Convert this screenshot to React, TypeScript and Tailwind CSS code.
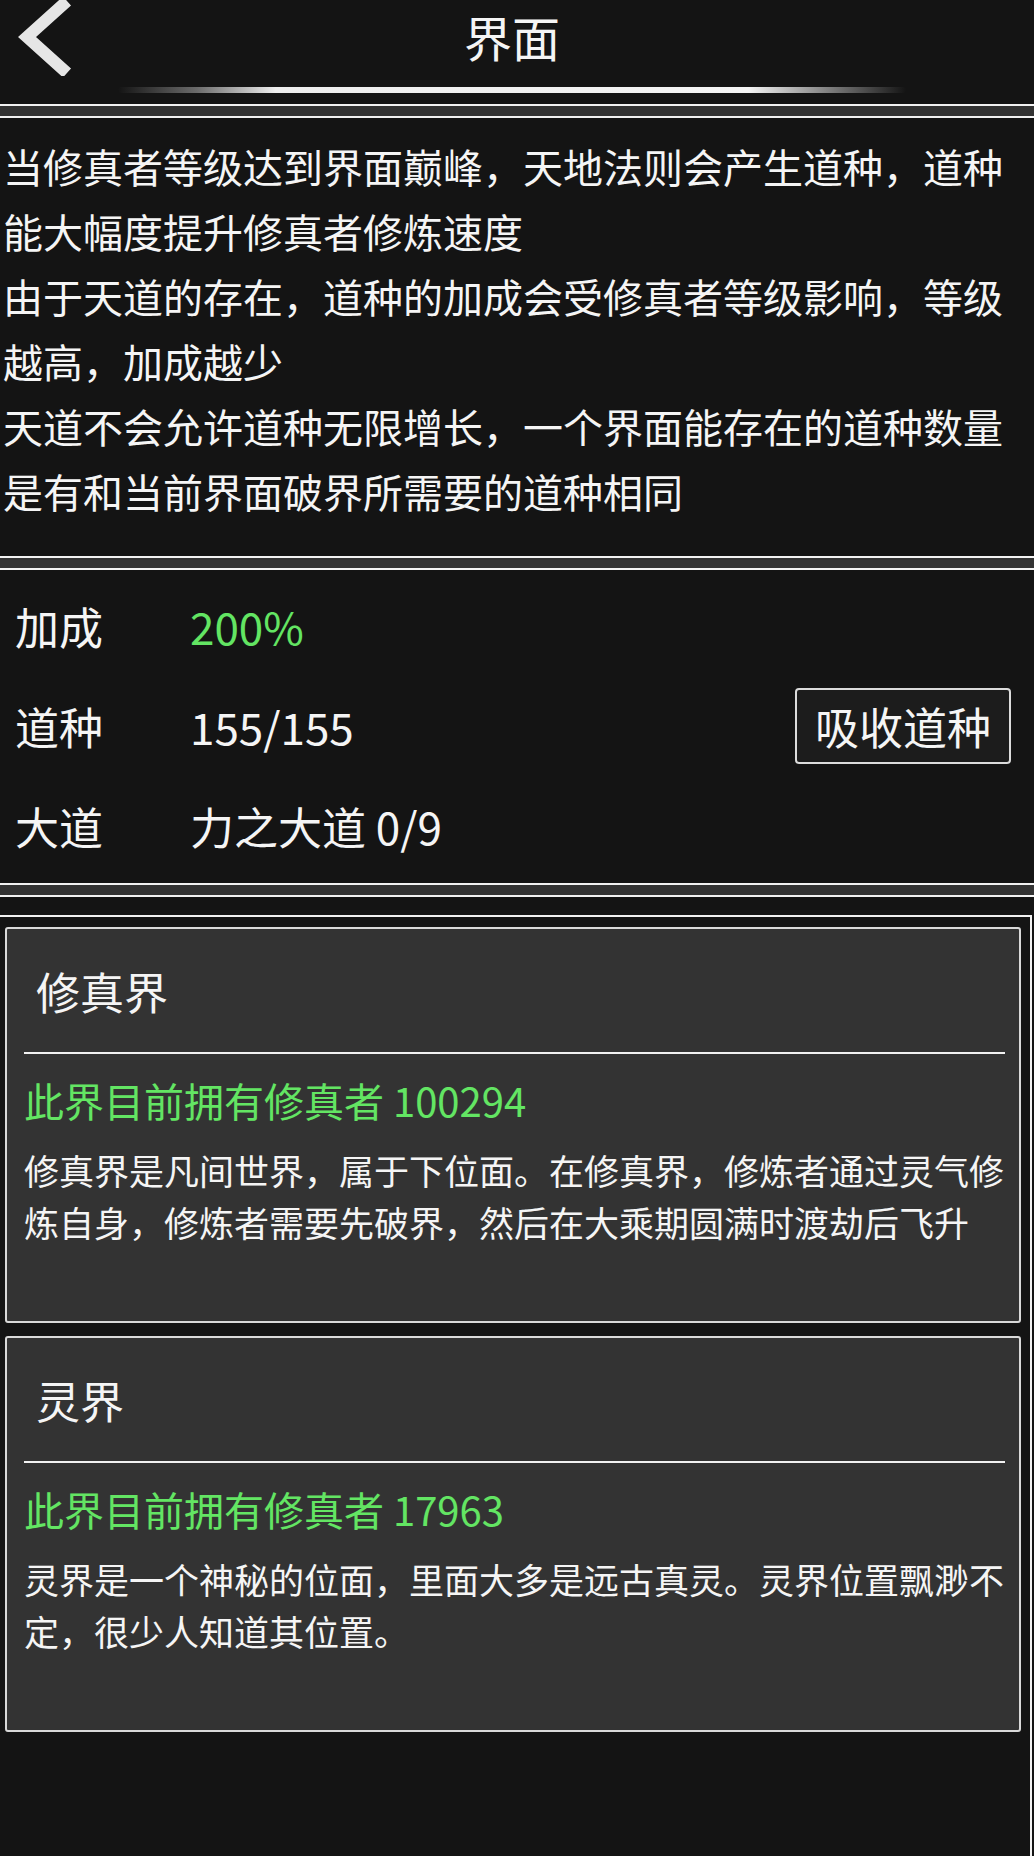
import React from "react";

const FONT = { fontFamily: '"Noto Sans CJK SC", "Noto Sans", sans-serif' };

const Separator = () => (
  <div className="h-[14px] border-y-2 border-[#f2f2f2] bg-[#333333]" />
);

const BackIcon = () => (
  <svg width="60" height="76" viewBox="0 0 60 76" fill="none">
    <path
      d="M50 1 L10 37 L50 73"
      stroke="#e6e6e6"
      strokeWidth="12"
      strokeLinejoin="miter"
    />
  </svg>
);

const paragraphs = [
  "当修真者等级达到界面巅峰，天地法则会产生道种，道种能大幅度提升修真者修炼速度",
  "由于天道的存在，道种的加成会受修真者等级影响，等级越高，加成越少",
  "天道不会允许道种无限增长，一个界面能存在的道种数量是有和当前界面破界所需要的道种相同",
];

const realms = [
  {
    name: "修真界",
    count: 100294,
    desc: "修真界是凡间世界，属于下位面。在修真界，修炼者通过灵气修炼自身，修炼者需要先破界，然后在大乘期圆满时渡劫后飞升",
  },
  {
    name: "灵界",
    count: 17963,
    desc: "灵界是一个神秘的位面，里面大多是远古真灵。灵界位置飘渺不定，很少人知道其位置。",
  },
];

const StatRow = ({
  label,
  children,
  action,
}: {
  label: string;
  children: React.ReactNode;
  action?: React.ReactNode;
}) => (
  <div className="flex h-[100px] items-center pl-[15px] pr-[23px]">
    <span className="w-[175px] text-[44px]">{label}</span>
    <span className="flex-1 text-[44px]">{children}</span>
    {action}
  </div>
);

const RealmCard = ({
  name,
  count,
  desc,
}: {
  name: string;
  count: number;
  desc: string;
}) => (
  <div className="w-[1016px] rounded-[3px] border-2 border-[#d9d9d9] bg-[#333333] pb-[73px] pl-[17px] pr-[14px]">
    <div className="flex h-[123px] items-center pl-[12px] text-[44px] leading-none">
      {name}
    </div>
    <div className="h-[2px] bg-[#f2f2f2]" />
    <div className="mt-[18px] text-[40px] leading-[56px] text-[#63e563]">
      此界目前拥有修真者 {count}
    </div>
    <p className="mt-[16px] text-[35px] leading-[52px]">{desc}</p>
  </div>
);

export default function App() {
  return (
    <div
      className="flex min-h-[1856px] w-[1034px] flex-col bg-[#141414] text-[#f5f5f5]"
      style={FONT}
    >
      {/* header */}
      <div className="h-[104px]">
        <div className="flex h-[74px] items-start">
          <button className="flex w-[80px] items-start pl-[17px]">
            <BackIcon />
          </button>
          <h1 className="flex-1 pt-[12px] text-center text-[48px] leading-none">界面</h1>
          <div className="w-[90px]" />
        </div>
        <div className="ml-[118px] mt-[13px] h-[6px] w-[788px] rounded-full bg-[linear-gradient(to_right,transparent_0%,#6b6b6b_10%,#eeeeee_20%,#f4f4f4_80%,#6b6b6b_92%,transparent_100%)]" />
      </div>

      <Separator />

      <div className="pl-[3px] pt-[16px] pb-[32px] text-[40px] leading-[65px]">
        {paragraphs.map((p) => (
          <p key={p}>{p}</p>
        ))}
      </div>

      <Separator />

      <div className="pt-[6px] pb-[7px]">
        <StatRow label="加成">
          <span className="text-[#63e563]">200%</span>
        </StatRow>
        <StatRow
          label="道种"
          action={
            <button className="flex h-[76px] w-[216px] items-center justify-center rounded-[4px] border-2 border-[#dcdcdc] bg-[#1c1c1c] text-[44px] leading-none">
              吸收道种
            </button>
          }
        >
          155/155
        </StatRow>
        <StatRow label="大道">力之大道 0/9</StatRow>
      </div>

      <Separator />

      <div className="mt-[18px] flex w-[1032px] flex-1 flex-col gap-[13px] border-r-2 border-t-2 border-[#f2f2f2] pl-[5px] pt-[10px]">
        {realms.map((r) => (
          <RealmCard key={r.name} {...r} />
        ))}
      </div>
    </div>
  );
}
